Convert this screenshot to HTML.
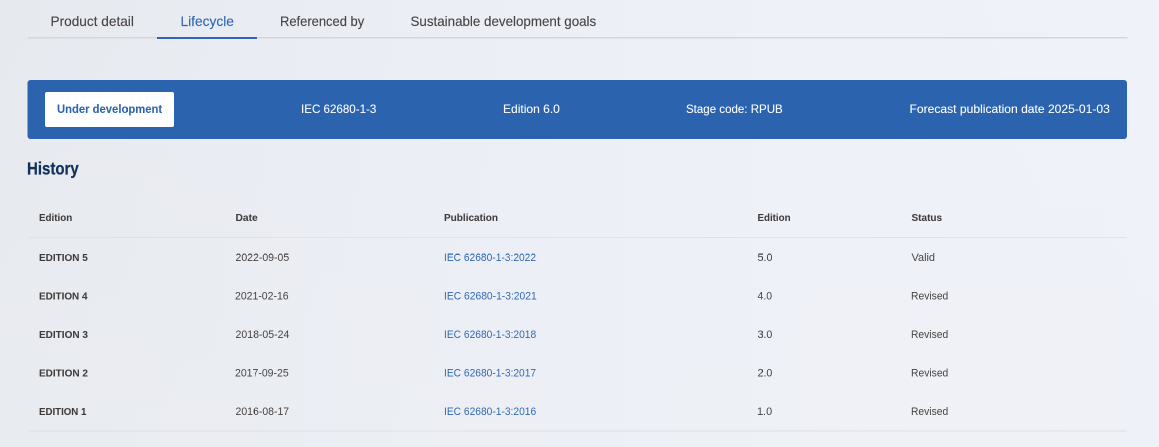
<!DOCTYPE html>
<html><head><meta charset="utf-8"><style>
html,body{margin:0;padding:0;}
body{width:1159px;height:447px;overflow:hidden;position:relative;background:linear-gradient(180deg,rgba(238,240,243,0) 0%,rgba(238,240,243,0.35) 100%),linear-gradient(90deg,#e6e9ee 0%,#ebeef5 38%,#eef1f8 70%,#eff2f9 100%);font-family:"Liberation Sans",sans-serif;}
#root{position:absolute;left:0;top:0;width:2318px;height:894px;transform-origin:0 0;transform:scale(0.5);will-change:transform;}
.t{position:absolute;white-space:nowrap;transform-origin:0 0;-webkit-font-smoothing:antialiased;}
</style></head><body><div id="root">
<div style="position:absolute;left:55.20px;top:74.20px;width:2200.00px;height:2.40px;background:#d5d6d8;border-radius:0.00px"></div>
<div style="position:absolute;left:314.00px;top:74.00px;width:200.00px;height:4.00px;background:#2f66b3;border-radius:0.00px"></div>
<div style="position:absolute;left:55.00px;top:160.40px;width:2199.40px;height:117.40px;background:#2b63ae;border-radius:6.00px"></div>
<div style="position:absolute;left:90.00px;top:183.80px;width:258.20px;height:70.40px;background:#fff;border-radius:4.00px"></div>
<div style="position:absolute;left:56.00px;top:474.00px;width:2198.00px;height:2.00px;background:#dfe2e7;border-radius:0.00px"></div>
<div style="position:absolute;left:56.00px;top:861.00px;width:2198.00px;height:2.00px;background:#dcdfe3;border-radius:0.00px"></div>
<div class="t" style="left:100.74px;top:28.71px;font-size:27.80px;line-height:27.80px;font-weight:400;color:#484343;-webkit-text-stroke:0.25px #484343;transform:scaleX(0.9810)">Product detail</div>
<div class="t" style="left:360.79px;top:28.71px;font-size:27.80px;line-height:27.80px;font-weight:400;color:#2f66b3;-webkit-text-stroke:0.25px #2f66b3;transform:scaleX(0.9876)">Lifecycle</div>
<div class="t" style="left:559.74px;top:28.71px;font-size:27.80px;line-height:27.80px;font-weight:400;color:#484343;-webkit-text-stroke:0.25px #484343;transform:scaleX(0.9314)">Referenced by</div>
<div class="t" style="left:821.39px;top:28.71px;font-size:27.80px;line-height:27.80px;font-weight:400;color:#484343;-webkit-text-stroke:0.25px #484343;transform:scaleX(0.9614)">Sustainable development goals</div>
<div class="t" style="left:113.68px;top:206.91px;font-size:23.40px;line-height:23.40px;font-weight:700;color:#2b63ae;-webkit-text-stroke:0.1px #2b63ae;transform:scaleX(0.9626)">Under development</div>
<div class="t" style="left:601.50px;top:206.01px;font-size:24.30px;line-height:24.30px;font-weight:400;color:#ffffff;-webkit-text-stroke:0.15px #ffffff;transform:scaleX(0.9531)">IEC 62680-1-3</div>
<div class="t" style="left:1005.53px;top:206.01px;font-size:24.30px;line-height:24.30px;font-weight:400;color:#ffffff;-webkit-text-stroke:0.15px #ffffff;transform:scaleX(0.9903)">Edition 6.0</div>
<div class="t" style="left:1372.24px;top:206.01px;font-size:24.30px;line-height:24.30px;font-weight:400;color:#ffffff;-webkit-text-stroke:0.15px #ffffff;transform:scaleX(0.9484)">Stage code: RPUB</div>
<div class="t" style="left:1818.60px;top:206.01px;font-size:24.30px;line-height:24.30px;font-weight:400;color:#ffffff;-webkit-text-stroke:0.15px #ffffff;transform:scaleX(0.9953)">Forecast publication date 2025-01-03</div>
<div class="t" style="left:54.24px;top:319.61px;font-size:35.76px;line-height:35.76px;font-weight:700;color:#12305d;-webkit-text-stroke:0.5px #12305d;transform:scaleX(0.8394)">History</div>
<div class="t" style="left:78.01px;top:425.82px;font-size:19.94px;line-height:19.94px;font-weight:700;color:#413c3c;-webkit-text-stroke:0.1px #413c3c;transform:scaleX(0.9843)">Edition</div>
<div class="t" style="left:470.64px;top:425.82px;font-size:19.94px;line-height:19.94px;font-weight:700;color:#413c3c;-webkit-text-stroke:0.1px #413c3c;transform:scaleX(1.0298)">Date</div>
<div class="t" style="left:887.82px;top:425.82px;font-size:19.94px;line-height:19.94px;font-weight:700;color:#413c3c;-webkit-text-stroke:0.1px #413c3c;transform:scaleX(1.0046)">Publication</div>
<div class="t" style="left:1514.93px;top:425.82px;font-size:19.94px;line-height:19.94px;font-weight:700;color:#413c3c;-webkit-text-stroke:0.1px #413c3c;transform:scaleX(0.9781)">Edition</div>
<div class="t" style="left:1822.68px;top:425.82px;font-size:19.94px;line-height:19.94px;font-weight:700;color:#413c3c;-webkit-text-stroke:0.1px #413c3c;transform:scaleX(1.0055)">Status</div>
<div class="t" style="left:77.76px;top:504.91px;font-size:20.06px;line-height:20.06px;font-weight:700;color:#413c3c;-webkit-text-stroke:0.1px #413c3c;transform:scaleX(0.9951)">EDITION 5</div>
<div class="t" style="left:471.26px;top:504.90px;font-size:21.36px;line-height:21.36px;font-weight:400;color:#484343;-webkit-text-stroke:0.0px #484343;transform:scaleX(0.9822)">2022-09-05</div>
<div class="t" style="left:887.97px;top:504.90px;font-size:21.36px;line-height:21.36px;font-weight:400;color:#3169b4;-webkit-text-stroke:0.0px #3169b4;transform:scaleX(0.9570)">IEC 62680-1-3:2022</div>
<div class="t" style="left:1515.05px;top:504.90px;font-size:21.36px;line-height:21.36px;font-weight:400;color:#484343;-webkit-text-stroke:0.0px #484343;transform:scaleX(1.0078)">5.0</div>
<div class="t" style="left:1822.63px;top:504.90px;font-size:21.36px;line-height:21.36px;font-weight:400;color:#484343;-webkit-text-stroke:0.0px #484343;transform:scaleX(1.0242)">Valid</div>
<div class="t" style="left:77.82px;top:581.81px;font-size:20.06px;line-height:20.06px;font-weight:700;color:#413c3c;-webkit-text-stroke:0.1px #413c3c;transform:scaleX(0.9894)">EDITION 4</div>
<div class="t" style="left:470.35px;top:581.82px;font-size:21.36px;line-height:21.36px;font-weight:400;color:#484343;-webkit-text-stroke:0.0px #484343;transform:scaleX(0.9816)">2021-02-16</div>
<div class="t" style="left:887.94px;top:581.82px;font-size:21.36px;line-height:21.36px;font-weight:400;color:#3169b4;-webkit-text-stroke:0.0px #3169b4;transform:scaleX(0.9639)">IEC 62680-1-3:2021</div>
<div class="t" style="left:1515.22px;top:581.82px;font-size:21.36px;line-height:21.36px;font-weight:400;color:#484343;-webkit-text-stroke:0.0px #484343;transform:scaleX(0.9787)">4.0</div>
<div class="t" style="left:1821.57px;top:581.82px;font-size:21.36px;line-height:21.36px;font-weight:400;color:#484343;-webkit-text-stroke:0.0px #484343;transform:scaleX(0.9666)">Revised</div>
<div class="t" style="left:77.73px;top:658.71px;font-size:20.06px;line-height:20.06px;font-weight:700;color:#413c3c;-webkit-text-stroke:0.1px #413c3c;transform:scaleX(0.9982)">EDITION 3</div>
<div class="t" style="left:471.24px;top:658.71px;font-size:21.36px;line-height:21.36px;font-weight:400;color:#484343;-webkit-text-stroke:0.0px #484343;transform:scaleX(0.9859)">2018-05-24</div>
<div class="t" style="left:888.00px;top:658.71px;font-size:21.36px;line-height:21.36px;font-weight:400;color:#3169b4;-webkit-text-stroke:0.0px #3169b4;transform:scaleX(0.9584)">IEC 62680-1-3:2018</div>
<div class="t" style="left:1514.98px;top:658.71px;font-size:21.36px;line-height:21.36px;font-weight:400;color:#484343;-webkit-text-stroke:0.0px #484343;transform:scaleX(0.9992)">3.0</div>
<div class="t" style="left:1822.15px;top:658.71px;font-size:21.36px;line-height:21.36px;font-weight:400;color:#484343;-webkit-text-stroke:0.0px #484343;transform:scaleX(0.9634)">Revised</div>
<div class="t" style="left:77.70px;top:735.60px;font-size:20.06px;line-height:20.06px;font-weight:700;color:#413c3c;-webkit-text-stroke:0.1px #413c3c;transform:scaleX(0.9987)">EDITION 2</div>
<div class="t" style="left:470.34px;top:735.61px;font-size:21.36px;line-height:21.36px;font-weight:400;color:#484343;-webkit-text-stroke:0.0px #484343;transform:scaleX(0.9823)">2017-09-25</div>
<div class="t" style="left:888.00px;top:735.61px;font-size:21.36px;line-height:21.36px;font-weight:400;color:#3169b4;-webkit-text-stroke:0.0px #3169b4;transform:scaleX(0.9576)">IEC 62680-1-3:2017</div>
<div class="t" style="left:1515.33px;top:735.61px;font-size:21.36px;line-height:21.36px;font-weight:400;color:#484343;-webkit-text-stroke:0.0px #484343;transform:scaleX(1.0030)">2.0</div>
<div class="t" style="left:1821.57px;top:735.61px;font-size:21.36px;line-height:21.36px;font-weight:400;color:#484343;-webkit-text-stroke:0.0px #484343;transform:scaleX(0.9666)">Revised</div>
<div class="t" style="left:77.97px;top:812.50px;font-size:20.06px;line-height:20.06px;font-weight:700;color:#413c3c;-webkit-text-stroke:0.1px #413c3c;transform:scaleX(0.9670)">EDITION 1</div>
<div class="t" style="left:470.52px;top:812.51px;font-size:21.36px;line-height:21.36px;font-weight:400;color:#484343;-webkit-text-stroke:0.0px #484343;transform:scaleX(0.9818)">2016-08-17</div>
<div class="t" style="left:888.00px;top:812.51px;font-size:21.36px;line-height:21.36px;font-weight:400;color:#3169b4;-webkit-text-stroke:0.0px #3169b4;transform:scaleX(0.9581)">IEC 62680-1-3:2016</div>
<div class="t" style="left:1514.09px;top:812.51px;font-size:21.36px;line-height:21.36px;font-weight:400;color:#484343;-webkit-text-stroke:0.0px #484343;transform:scaleX(1.0196)">1.0</div>
<div class="t" style="left:1822.15px;top:812.51px;font-size:21.36px;line-height:21.36px;font-weight:400;color:#484343;-webkit-text-stroke:0.0px #484343;transform:scaleX(0.9631)">Revised</div>
</div></body></html>
